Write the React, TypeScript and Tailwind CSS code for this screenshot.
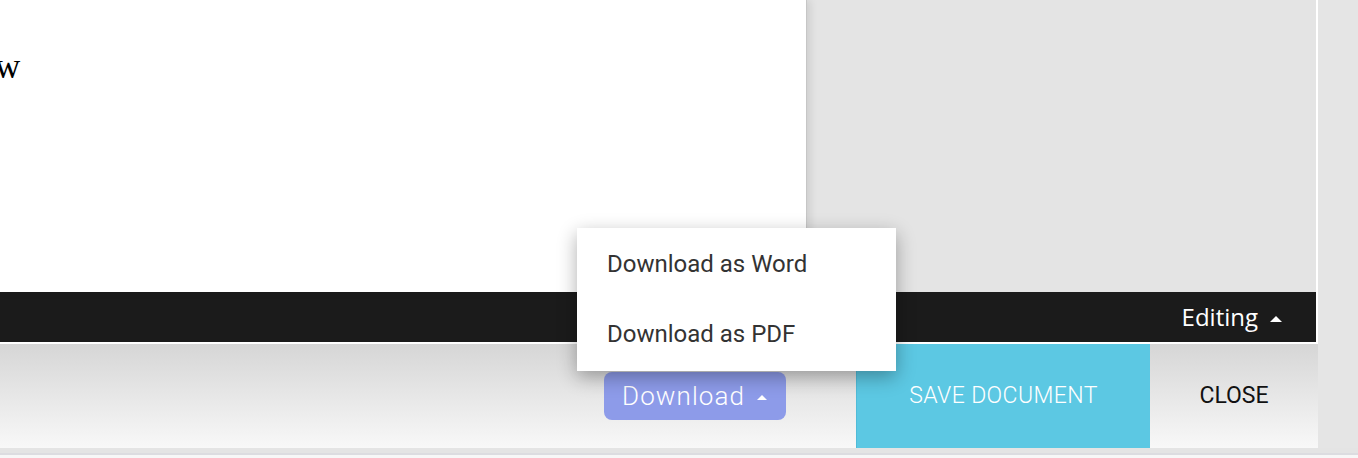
import React from 'react';

// Small upward caret drawn with borders
function CaretUp({ size }: { size: 'sm' | 'md' }) {
    if (size === 'sm') {
        return <span className="inline-block w-0 h-0 border-l-[5px] border-r-[5px] border-b-[5px] border-l-transparent border-r-transparent border-b-white" />;
    }
    return <span className="inline-block w-0 h-0 border-l-[6.5px] border-r-[6.5px] border-b-[6px] border-l-transparent border-r-transparent border-b-white" />;
}

export default function App() {
    const menuItems = ['Download as Word', 'Download as PDF'];

    return (
        <div className="relative w-[1358px] h-[458px] overflow-hidden bg-[#e5e5e5] font-['Roboto',sans-serif]">
            <div className="flex h-[448px]">
                {/* Editor column */}
                <div className="w-[1318px] flex flex-col">
                    {/* Page + canvas */}
                    <div className="h-[292px] flex border-r-2 border-white">
                        <div className="relative z-10 w-[807px] bg-white border-r border-[#c6c6c6] shadow-[3px_0_8px_rgba(0,0,0,0.10)] pt-[49px] overflow-hidden">
                            <p className="-ml-[5px] text-[35px] leading-[35px] text-black font-['Liberation_Serif',serif]">w</p>
                        </div>
                        <div className="flex-1 bg-[#e4e4e4]" />
                    </div>

                    {/* Status bar */}
                    <div className="h-[50px] bg-[#1b1b1b] border-r-2 border-white flex items-center justify-end pr-[34px]">
                        <span className="text-white text-[24px] font-['Open_Sans',sans-serif]">Editing</span>
                        <span className="ml-[12px] mt-[3px] flex items-center">
                            <CaretUp size="md" />
                        </span>
                    </div>
                    <div className="h-[2px] bg-white" />

                    {/* Action bar */}
                    <div className="h-[104px] bg-linear-to-b from-[#d6d6d6] to-[#f8f8f8] flex items-stretch justify-end">
                        <div className="flex items-center mr-[70px]">
                            <button className="h-[48px] w-[182px] rounded-[8px] bg-[#8d9be9] text-white flex items-center pl-[18px]">
                                <span className="text-[26px] font-light tracking-[1.1px]">Download</span>
                                <span className="ml-[12px] mt-[2px] flex items-center">
                                    <CaretUp size="sm" />
                                </span>
                            </button>
                        </div>
                        <button className="w-[294px] bg-[#5cc8e3] border-l border-[#50bbd8] text-white text-[23px] font-light tracking-[0.4px] flex items-center justify-center">
                            SAVE DOCUMENT
                        </button>
                        <button className="w-[168px] text-[#111] text-[23px] flex items-center justify-center">
                            CLOSE
                        </button>
                    </div>
                </div>
                <div className="flex-1 bg-[#e5e5e5]" />
            </div>

            {/* Bottom edge */}
            <div className="h-[5px] bg-[#e4e4e4]" />
            <div className="h-[2px] bg-[#dcdce0]" />
            <div className="h-[3px] bg-[#f7f7f7]" />

            {/* Download menu */}
            <div className="absolute left-[577px] top-[228px] w-[319px] bg-white pt-[1px] pb-[2px] shadow-[0_6px_18px_rgba(0,0,0,0.32)] z-20">
                {menuItems.map((item) => (
                    <div key={item} className="h-[70px] flex items-center pl-[30px] text-[24px] text-[#333]">
                        {item}
                    </div>
                ))}
            </div>
        </div>
    );
}
